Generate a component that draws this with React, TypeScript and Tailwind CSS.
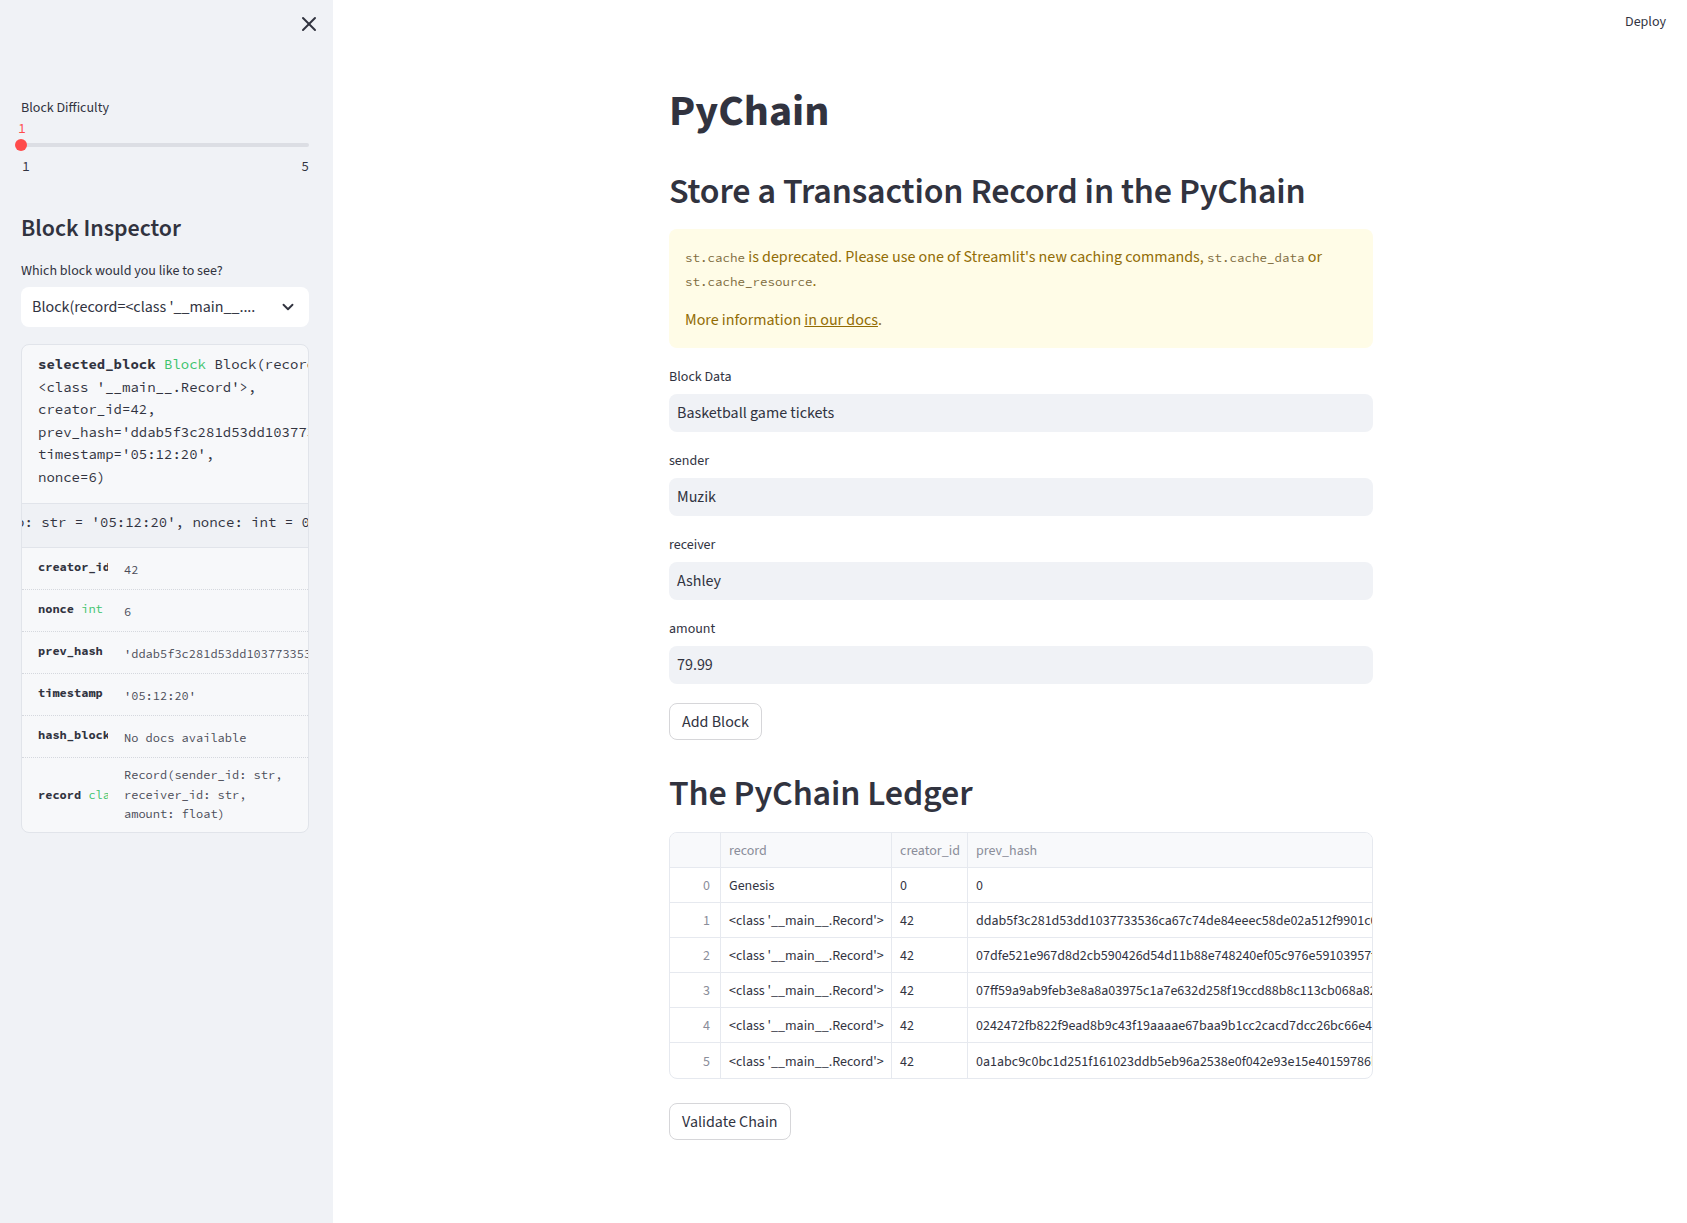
import React from "react";
import { X, ChevronDown } from "lucide-react";

const sans = "font-['Source_Sans_Pro','Source_Sans_3',Lato,sans-serif]";
const mono = "font-['Source_Code_Pro','DejaVu_Sans_Mono','Liberation_Mono',monospace]";

const rows = [
  { i: 0, record: "Genesis", creator: "0", hash: "0" },
  { i: 1, record: "<class '__main__.Record'>", creator: "42", hash: "ddab5f3c281d53dd1037733536ca67c74de84eeec58de02a512f9901c0a7b3e1" },
  { i: 2, record: "<class '__main__.Record'>", creator: "42", hash: "07dfe521e967d8d2cb590426d54d11b88e748240ef05c976e59103957f1c2a44" },
  { i: 3, record: "<class '__main__.Record'>", creator: "42", hash: "07ff59a9ab9feb3e8a8a03975c1a7e632d258f19ccd88b8c113cb068a82d6e0f" },
  { i: 4, record: "<class '__main__.Record'>", creator: "42", hash: "0242472fb822f9ead8b9c43f19aaaae67baa9b1cc2cacd7dcc26bc66e4a93b15" },
  { i: 5, record: "<class '__main__.Record'>", creator: "42", hash: "0a1abc9c0bc1d251f161023ddb5eb96a2538e0f042e93e15e40159786b2d7c90" },
];

function Field({ label, value }: { label: string; value: string }) {
  return (
    <div className="mt-[17px]">
      <div className="h-6 flex items-center text-[14px]">{label}</div>
      <div className="mt-[5px] h-[38px] rounded-lg bg-[#f0f2f6] flex items-center px-2 text-[16px]">{value}</div>
    </div>
  );
}

function InfoRow({ name, type, value }: { name: string; type?: string; value: React.ReactNode }) {
  return (
    <div className="h-[42px] flex items-center border-b border-dotted border-[#d5d8de]">
      <div className={`${mono} w-[70px] ml-4 shrink-0 overflow-hidden whitespace-nowrap text-[12px] font-bold text-[#31333f] pb-[3px]`}>
        {name}
        {type && <span className="font-normal text-[#3ec46d]"> {type}</span>}
      </div>
      <div className={`${mono} ml-4 whitespace-nowrap text-[12px] text-[#4a4c58] pt-[3px]`}>{value}</div>
    </div>
  );
}

export default function App() {
  return (
    <div className={`${sans} flex min-h-[1223px] w-full text-[#31333f] bg-white`}>
      <aside className="w-[333px] shrink-0 bg-[#f0f2f6] pl-[21px] pr-[24px]">
        <div className="h-12 flex items-center justify-end -mr-[12px]">
          <X size={24} strokeWidth={2} className="text-[#31333f]" />
        </div>
        <div className="mt-12 h-6 flex items-center text-[14px]">Block Difficulty</div>
        <div className="relative">
          <div className={`${mono} h-[17px] flex items-center text-[13px] text-[#ff4b4b] -ml-[3px]`}>1</div>
          <div className="relative h-4 flex items-center">
            <div className="h-1 w-full rounded bg-[#dcdee4]" />
            <div className="absolute -left-[6px] top-[2px] h-3 w-3 rounded-full bg-[#ff4b4b]" />
          </div>
          <div className={`${mono} h-7 flex items-center justify-between text-[13px]`}>
            <span className="pl-[1px]">1</span>
            <span>5</span>
          </div>
        </div>
        <h3 className="mt-[33px] text-[24px] leading-[29px] font-semibold">Block Inspector</h3>
        <div className="mt-[16px] h-6 flex items-center text-[14px]">Which block would you like to see?</div>
        <div className="mt-1 h-10 rounded-lg bg-white flex items-center justify-between pl-[11px] pr-[12px] text-[16px]">
          <span className="whitespace-nowrap overflow-hidden">Block(record=&lt;class '__main__....</span>
          <ChevronDown size={18} strokeWidth={2.5} />
        </div>
        <div className="mt-[17px] rounded-lg border border-[#e1e4ea] bg-[#f7f8fa] overflow-hidden">
          <div className={`${mono} pt-2 pb-[14px] pl-4 text-[14px] leading-[22.6px] whitespace-nowrap overflow-hidden text-[#31333f]`}>
            <div>
              <span className="font-bold">selected_block</span> <span className="text-[#3ec46d]">Block</span> Block(record=
            </div>
            <div>&lt;class '__main__.Record'&gt;,</div>
            <div>creator_id=42,</div>
            <div>prev_hash='ddab5f3c281d53dd1037733536ca67c74de84eeec58de02a512f9901c0a7b3e1',</div>
            <div>timestamp='05:12:20',</div>
            <div>nonce=6)</div>
          </div>
          <div className={`${mono} h-[45px] flex items-center border-y border-[#e1e4ea] bg-[#eff1f5] whitespace-nowrap overflow-hidden text-[14px] text-[#31333f]`}>
            <span className="-ml-[6px] pb-[5px]">p: str = '05:12:20', nonce: int = 0)</span>
          </div>
          <InfoRow name="creator_id" value="42" />
          <InfoRow name="nonce" type="int" value="6" />
          <InfoRow name="prev_hash" value="'ddab5f3c281d53dd1037733536ca67c74de84eeec58de02a512f9901c0a7b3e1'" />
          <InfoRow name="timestamp" value="'05:12:20'" />
          <InfoRow name="hash_block" value="No docs available" />
          <div className="h-[74px] flex items-center">
            <div className={`${mono} w-[70px] ml-4 shrink-0 overflow-hidden whitespace-nowrap text-[12px] font-bold`}>
              record<span className="font-normal text-[#3ec46d]"> class</span>
            </div>
            <div className={`${mono} ml-4 text-[12px] leading-[19.5px] text-[#4a4c58] whitespace-nowrap`}>
              <div>Record(sender_id: str,</div>
              <div>receiver_id: str,</div>
              <div>amount: float)</div>
            </div>
          </div>
        </div>
      </aside>

      <main className="relative flex-1">
        <div className="absolute right-[21px] top-[12px] text-[14px] h-5 flex items-center">Deploy</div>
        <div className="ml-[336px] w-[704px] pt-[85px] pb-20">
          <h1 className="text-[44px] leading-[53px] font-bold">PyChain</h1>
          <h2 className="mt-[32px] text-[36px] leading-[43px] font-semibold tracking-[-0.15px]">
            Store a Transaction Record in the PyChain
          </h2>
          <div className="mt-[16px] rounded-lg bg-[#fffce7] px-4 pt-4 pb-[16px] text-[16px] text-[#926c05] leading-[24px]">
            <p>
              <code className={`${mono} text-[12.5px] leading-none text-[#7d6a3c]`}>st.cache</code> is deprecated. Please use one of
              Streamlit's new caching commands,{" "}
              <code className={`${mono} text-[12.5px] leading-none text-[#7d6a3c]`}>st.cache_data</code> or{" "}
              <code className={`${mono} text-[12.5px] leading-none text-[#7d6a3c]`}>st.cache_resource</code>.
            </p>
            <p className="mt-[15px]">
              More information <span className="underline">in our docs</span>.
            </p>
          </div>
          <Field label="Block Data" value="Basketball game tickets" />
          <Field label="sender" value="Muzik" />
          <Field label="receiver" value="Ashley" />
          <Field label="amount" value="79.99" />
          <button className="mt-[19px] h-[37px] px-3 rounded-lg border border-[#d6d6d9] bg-white text-[16px]">Add Block</button>
          <h2 className="mt-[32px] text-[36px] leading-[43px] font-semibold tracking-[-0.15px]">The PyChain Ledger</h2>
          <div className="mt-[17px] rounded-lg border border-[#e6e9ef] overflow-hidden text-[14px]">
            <div className="grid grid-cols-[51px_171px_76px_1fr] h-[35px] bg-[#f8f9fb] border-b border-[#e6e9ef] text-[#8a8d99]">
              <div className="border-r border-[#e6e9ef]" />
              <div className="border-r border-[#e6e9ef] flex items-center px-2 pt-[3px]">record</div>
              <div className="border-r border-[#e6e9ef] flex items-center px-2 pt-[3px]">creator_id</div>
              <div className="flex items-center px-2 pt-[3px]">prev_hash</div>
            </div>
            {rows.map((r, idx) => (
              <div
                key={r.i}
                className={`grid grid-cols-[51px_171px_76px_1fr] h-[35px] ${idx < rows.length - 1 ? "border-b border-[#e6e9ef]" : ""}`}
              >
                <div className="border-r border-[#e6e9ef] flex items-center justify-end pr-[10px] pt-[3px] text-[#8a8d99]">{r.i}</div>
                <div className="border-r border-[#e6e9ef] flex items-center px-2 pt-[3px] whitespace-nowrap overflow-hidden">{r.record}</div>
                <div className="border-r border-[#e6e9ef] flex items-center px-2 pt-[3px]">{r.creator}</div>
                <div className="flex items-center px-2 pt-[3px] whitespace-nowrap overflow-hidden">{r.hash}</div>
              </div>
            ))}
          </div>
          <button className="mt-[24px] h-[37px] px-3 rounded-lg border border-[#d6d6d9] bg-white text-[16px]">Validate Chain</button>
        </div>
      </main>
    </div>
  );
}
